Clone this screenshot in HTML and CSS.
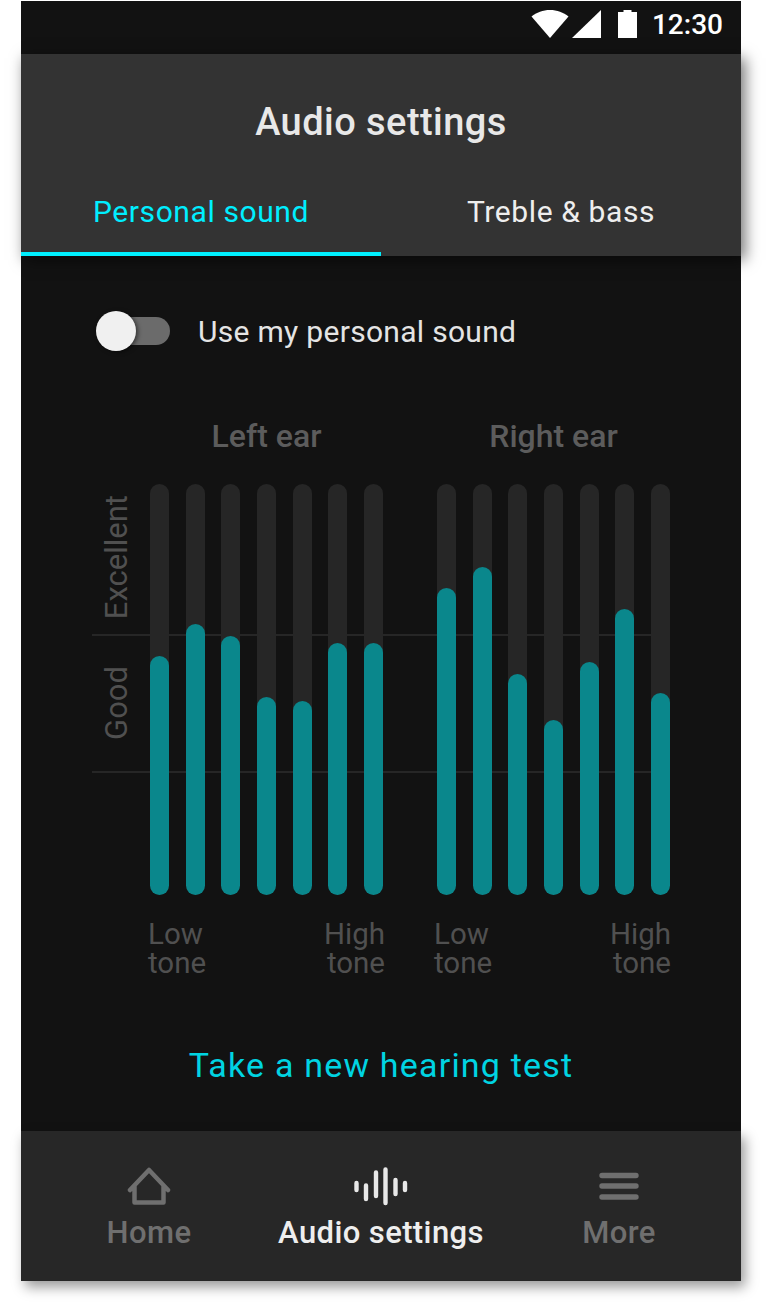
FILE: index.html
```html
<!DOCTYPE html>
<html lang="en">
<head>
    <meta charset="UTF-8">
    <meta name="viewport" content="width=device-width, initial-scale=1.0">
    <title>Audio settings</title>
    <link rel="stylesheet" href="styles.css">
</head>
<body>
    <div class="phone">
        <!-- status bar -->
        <div class="status-bar">
            <svg class="status-wifi" width="38" height="28" viewBox="0 0 38 28"><path d="M19 28 L0.5 6.5 C5.5 2.5 12 0 19 0 C26 0 32.5 2.5 37.5 6.5 Z" fill="#fff"/></svg>
            <svg class="status-signal" width="29" height="28" viewBox="0 0 29 28"><path d="M0 28 L29 0 V28 Z" fill="#fff"/></svg>
            <svg class="status-battery" width="19" height="28" viewBox="0 0 19 28"><path d="M5.5 2 V0 H13.5 V2 H19 V28 H0 V2 Z" fill="#fff"/></svg>
            <span class="status-time">12:30</span>
        </div>

        <!-- header -->
        <div class="header">
            <h1 class="title">Audio settings</h1>
            <div class="tabs">
                <div class="tab active">Personal sound</div>
                <div class="tab">Treble &amp; bass</div>
            </div>
        </div>

        <div class="content">
            <div class="toggle-row">
                <div class="toggle"><div class="toggle-knob"></div></div>
                <span class="toggle-label">Use my personal sound</span>
            </div>

            <div class="ear-titles">
                <div class="ear-title">Left ear</div>
                <div class="ear-title">Right ear</div>
            </div>

            <div class="chart">
                <div class="grid-line first"></div>
                <div class="grid-line second"></div>
                <div class="axis">
                    <div class="axis-zone excellent"><span>Excellent</span></div>
                    <div class="axis-zone good"><span>Good</span></div>
                </div>
                <div class="bars">
                    <div class="track"><div class="fill" style="height: 239px"></div></div>
                    <div class="track"><div class="fill" style="height: 271px"></div></div>
                    <div class="track"><div class="fill" style="height: 259px"></div></div>
                    <div class="track"><div class="fill" style="height: 198px"></div></div>
                    <div class="track"><div class="fill" style="height: 194px"></div></div>
                    <div class="track"><div class="fill" style="height: 252px"></div></div>
                    <div class="track"><div class="fill" style="height: 252px"></div></div>
                </div>
                <div class="bars">
                    <div class="track"><div class="fill" style="height: 307px"></div></div>
                    <div class="track"><div class="fill" style="height: 328px"></div></div>
                    <div class="track"><div class="fill" style="height: 221px"></div></div>
                    <div class="track"><div class="fill" style="height: 175px"></div></div>
                    <div class="track"><div class="fill" style="height: 233px"></div></div>
                    <div class="track"><div class="fill" style="height: 286px"></div></div>
                    <div class="track"><div class="fill" style="height: 202px"></div></div>
                </div>
            </div>

            <div class="tone-labels">
                <div class="tone-pair">
                    <span>Low<br>tone</span>
                    <span class="high">High<br>tone</span>
                </div>
                <div class="tone-pair">
                    <span>Low<br>tone</span>
                    <span class="high">High<br>tone</span>
                </div>
            </div>

            <div class="test-link">Take a new hearing test</div>
        </div>

        <!-- bottom navigation -->
        <div class="bottom-nav">
            <div class="nav-item">
                <svg class="nav-icon" width="44" height="40" viewBox="0 0 44 40"><path d="M3 24 L22 4 L41 24 M7.500 20 V36.500 H36.500 V20" fill="none" stroke="#6f6f6f" stroke-width="4.500" stroke-linecap="round" stroke-linejoin="round"/></svg>
                <span>Home</span>
            </div>
            <div class="nav-item active">
                <svg class="nav-icon" width="56" height="40" viewBox="0 0 56 40" fill="none" stroke="#e8e8e8" stroke-width="4.400" stroke-linecap="round"><path d="M3.500 17 V24 M13 19.500 V33 M23 6.500 V30 M32.500 3.500 V37 M42.500 14 V28 M52 17 V24"/></svg>
                <span>Audio settings</span>
            </div>
            <div class="nav-item">
                <svg class="nav-icon" width="40" height="40" viewBox="0 0 40 40" fill="none" stroke="#6f6f6f" stroke-width="5.400" stroke-linecap="round"><path d="M3 9.500 H37 M3 20 H37 M3 31 H37"/></svg>
                <span>More</span>
            </div>
        </div>
    </div>
</body>
</html>
```

FILE: styles.css
```css
body {
    margin: 0;
    padding: 1px 0 0 21px;
    min-height: 1301px;
    background-color: #fff;
    font-family: Roboto, Arial, sans-serif;
}
.phone {
    width: 720px;
    height: 1280px;
    background-color: #121212;
    color: #f0f0f0;
    display: flex;
    flex-direction: column;
}

/* status bar */
.status-bar {
    height: 53px;
    flex: none;
    display: flex;
    align-items: center;
    justify-content: flex-end;
    padding: 0 18px 7px 0;
    box-sizing: border-box;
}
.status-wifi {
    margin-right: 3px;
}
.status-battery {
    margin-left: 17px;
}
.status-time {
    margin-left: 15px;
    font-size: 28px;
    font-weight: 500;
    color: #fff;
}

/* header */
.header {
    height: 202px;
    flex: none;
    background-color: #333;
    box-shadow: 4px 4px 14px rgba(0, 0, 0, 0.55);
    display: flex;
    flex-direction: column;
    position: relative;
}
.title {
    margin: 0;
    height: 136px;
    line-height: 136px;
    text-align: center;
    font-size: 38px;
    font-weight: 500;
    letter-spacing: 0.45px;
    color: #e8e8e8;
}
.tabs {
    display: flex;
    flex: 1;
}
.tab {
    width: 50%;
    text-align: center;
    font-size: 30px;
    line-height: 44px;
    box-sizing: border-box;
    letter-spacing: 0.6px;
    color: #eee;
}
.tab.active {
    color: #00eeff;
    border-bottom: 4px solid #00f0ff;
}

/* main */
.content {
    flex: 1;
}
.toggle-row {
    display: flex;
    align-items: center;
    margin: 55px 0 0 75px;
    height: 40px;
}
.toggle {
    width: 70px;
    height: 28px;
    margin-left: 4px;
    border-radius: 14px;
    background-color: #6b6b6b;
    position: relative;
}
.toggle-knob {
    position: absolute;
    left: -4px;
    top: -6px;
    width: 40px;
    height: 40px;
    border-radius: 50%;
    background-color: #f0f0f0;
    box-shadow: 2px 1px 4px rgba(0, 0, 0, 0.5);
}
.toggle-label {
    margin-left: 28px;
    font-size: 30px;
    letter-spacing: 0.3px;
    color: #e4e4e4;
}
.ear-titles {
    display: flex;
    gap: 54px;
    margin: 65px 0 0 129px;
}
.ear-title {
    width: 233px;
    text-align: center;
    font-size: 32px;
    font-weight: 500;
    line-height: 40px;
    color: #5c5c5c;
}
.chart {
    display: flex;
    position: relative;
    margin: 28px 0 0 71px;
    height: 411px;
}
.grid-line {
    position: absolute;
    left: 0;
    width: 559px;
    height: 2px;
    background-color: #262626;
}
.grid-line.first {
    top: 150px;
}
.grid-line.second {
    top: 287px;
}
.axis {
    width: 58px;
    flex: none;
}
.axis-zone {
    display: flex;
    justify-content: center;
    align-items: center;
    width: 50px;
    height: 146px;
    font-size: 31px;
    color: #505050;
}
.axis-zone span {
    writing-mode: vertical-rl;
    transform: rotate(180deg);
    line-height: 26px;
}
.bars {
    width: 233px;
    display: flex;
    justify-content: space-between;
    margin-right: 54px;
    position: relative;
    flex: none;
}
.track {
    width: 19px;
    height: 411px;
    border-radius: 10px;
    background-color: #262626;
    display: flex;
    align-items: flex-end;
}
.fill {
    width: 100%;
    border-radius: 10px;
    background-color: #0a878c;
}
.tone-labels {
    display: flex;
    gap: 49px;
    margin: 25px 0 0 127px;
}
.tone-pair {
    width: 237px;
    display: flex;
    justify-content: space-between;
    font-size: 29.5px;
    line-height: 29px;
    color: #505050;
}
.high {
    text-align: right;
}
.test-link {
    margin-top: 62px;
    text-align: center;
    font-size: 34px;
    line-height: 50px;
    letter-spacing: 1.2px;
    color: #00d4e2;
}

/* bottom nav */
.bottom-nav {
    height: 150px;
    flex: none;
    background-color: #272727;
    box-shadow: 4px 6px 12px rgba(0, 0, 0, 0.4);
    display: grid;
    grid-template-columns: 224px 240px 236px;
    padding-left: 16px;
    position: relative;
}
.nav-item {
    display: flex;
    flex-direction: column;
    align-items: center;
    padding-top: 35px;
    font-size: 31px;
    font-weight: 500;
    letter-spacing: 0.4px;
    line-height: 40px;
    color: #6f6f6f;
}
.nav-item.active {
    color: #eee;
}
.nav-icon {
    margin-bottom: 7px;
}
```
